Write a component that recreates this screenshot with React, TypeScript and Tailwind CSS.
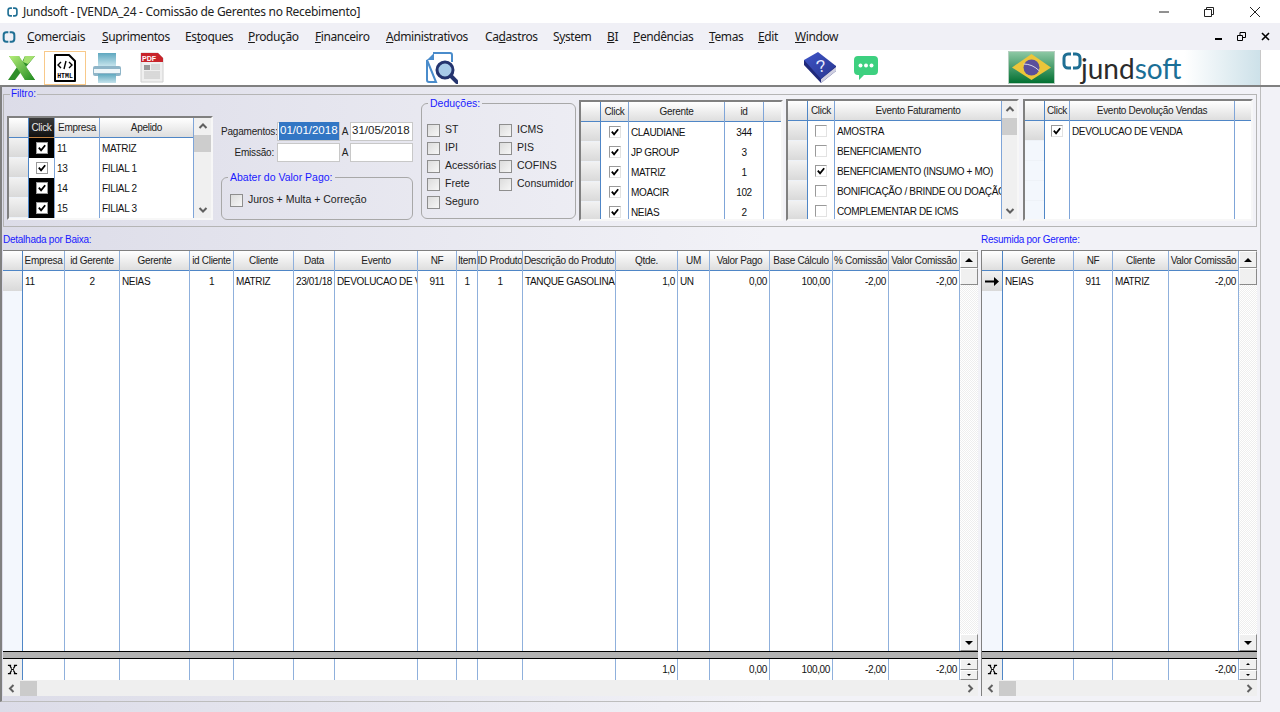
import type { ReactNode } from "react";

type Col = {
  label: string;
  w: string;
  align?: string;
  cells?: ReactNode[];
  footer?: string;
  dark?: boolean;
  noLine?: boolean;
};

const menus = [
  { pre: "", u: "C", post: "omerciais", w: "w-[75px]" },
  { pre: "", u: "S", post: "uprimentos", w: "w-[83px]" },
  { pre: "Es", u: "t", post: "oques", w: "w-[63px]" },
  { pre: "", u: "P", post: "rodução", w: "w-[67px]" },
  { pre: "", u: "F", post: "inanceiro", w: "w-[71px]" },
  { pre: "", u: "A", post: "dministrativos", w: "w-[99px]" },
  { pre: "Ca", u: "d", post: "astros", w: "w-[68px]" },
  { pre: "S", u: "y", post: "stem", w: "w-[54px]" },
  { pre: "", u: "B", post: "I", w: "w-[26px]" },
  { pre: "", u: "P", post: "endências", w: "w-[76px]" },
  { pre: "", u: "T", post: "emas", w: "w-[49px]" },
  { pre: "", u: "E", post: "dit", w: "w-[37px]" },
  { pre: "", u: "W", post: "indow", w: "w-[60px]" },
];

function Ring({ className }: { className: string }) {
  return (
    <svg viewBox="0 0 20 18" className={className} fill="none" stroke="#1f6f94" strokeWidth="3">
      <path d="M9 2H6a4 4 0 0 0-4 4v6a4 4 0 0 0 4 4h3" />
      <path d="M11 2h3a4 4 0 0 1 4 4v6a4 4 0 0 1-4 4h-3" />
    </svg>
  );
}

function Tick({ dark }: { dark?: boolean }) {
  return (
    <span
      className={`flex h-[12px] w-[12px] items-center justify-center border bg-white ${
        dark ? "border-[#9a9a9a]" : "border-t-[#9a9a9a] border-l-[#9a9a9a] border-r-[#e2e2e2] border-b-[#e2e2e2]"
      }`}
    >
      <svg viewBox="0 0 11 11" className="h-[10px] w-[10px]" fill="none" stroke="#000" strokeWidth="2">
        <path d="M2 5l2.5 3L9 2.5" />
      </svg>
    </span>
  );
}

function Empty() {
  return <span className="block h-[12px] w-[12px] border border-t-[#9a9a9a] border-l-[#9a9a9a] border-r-[#e2e2e2] border-b-[#e2e2e2] bg-white" />;
}

function Check({ label, className }: { label: string; className?: string }) {
  return (
    <div className={`flex h-[18px] items-center ${className ?? ""}`}>
      <span className="h-[13px] w-[13px] shrink-0 border border-[#8e8e8e] bg-[linear-gradient(135deg,#dcdcdc,#f6f6f6)]" />
      <span className="ml-[5px] whitespace-nowrap text-[10.5px] text-[#222]">{label}</span>
    </div>
  );
}

function Chevron({ dir }: { dir: "up" | "down" | "left" | "right" }) {
  const d = {
    up: "M1.5 6L5 2.5 8.5 6",
    down: "M1.5 3L5 6.5 8.5 3",
    left: "M6.5 1L3 4.5 6.5 8",
    right: "M3.5 1L7 4.5 3.5 8",
  }[dir];
  return (
    <svg viewBox="0 0 10 9" className="h-[9px] w-[10px]" fill="none" stroke="#606060" strokeWidth="2">
      <path d={d} />
    </svg>
  );
}

function Indicator({ filled }: { filled: boolean }) {
  return (
    <div
      className={`h-[20px] border-b border-[#eef2f8] ${
        filled ? "bg-[linear-gradient(180deg,#f2f2f2,#d9d9d9)]" : "bg-[#f3f7fd]"
      }`}
    />
  );
}

function HeaderCell({ label, dark }: { label: string; dark?: boolean }) {
  return (
    <div
      className={`flex h-[20px] items-center justify-center overflow-hidden whitespace-nowrap border-b text-[10px] tracking-[-0.3px] ${
        dark
          ? "border-[#c08040] bg-[linear-gradient(180deg,#3a3a3a,#111)] text-[#e8e8e8]"
          : "border-[#4f86c6] bg-[linear-gradient(180deg,#ffffff,#dedede)] text-[#222]"
      }`}
    >
      {label}
    </div>
  );
}

function SmallGrid({
  cols,
  rows,
  filled,
  className,
  scroll,
}: {
  cols: Col[];
  rows: number;
  filled: number;
  className: string;
  scroll?: boolean;
}) {
  return (
    <div className={`flex overflow-hidden border-2 border-t-[#808080] border-l-[#808080] border-r-[#f7f7f7] border-b-[#f7f7f7] bg-white ${className}`}>
      <div className="w-[20px] shrink-0 border-r border-[#4f86c6]">
        <div className="h-[20px] border-b border-[#4f86c6] bg-[linear-gradient(180deg,#ffffff,#dedede)]" />
        {Array.from({ length: rows }).map((_, i) => (
          <Indicator key={i} filled={i < filled} />
        ))}
      </div>
      {cols.map((c) => (
        <div key={c.label + c.w} className={`${c.w} shrink-0 ${c.noLine ? "" : "border-r border-[#7fa5d8]"}`}>
          <HeaderCell label={c.label} dark={c.dark} />
          {c.cells?.map((v, i) => (
            <div key={i} className={`flex h-[20px] items-center overflow-hidden whitespace-nowrap px-[2px] text-[10px] tracking-[-0.35px] text-[#111] ${c.align ?? ""}`}>
              {v}
            </div>
          ))}
        </div>
      ))}
      {scroll && (
        <div className="flex min-w-0 flex-1 flex-col items-center bg-[#f0f0f0]">
          <div className="flex h-[17px] items-center">
            <Chevron dir="up" />
          </div>
          <div className="h-[17px] w-full bg-[#cdcdcd]" />
          <div className="mt-auto flex h-[17px] items-center">
            <Chevron dir="down" />
          </div>
        </div>
      )}
    </div>
  );
}

function BevelButton({ className, children }: { className: string; children: ReactNode }) {
  return (
    <div className={`flex items-center justify-center border border-t-white border-l-white border-r-[#8a8a8a] border-b-[#8a8a8a] bg-[#f0f0f0] ${className}`}>
      {children}
    </div>
  );
}

function Tri({ up, small }: { up?: boolean; small?: boolean }) {
  return (
    <svg viewBox="0 0 8 4" className={small ? "h-[2px] w-[4px]" : "h-[4px] w-[8px]"} fill="#000">
      <path d={up ? "M4 0l4 4H0z" : "M0 0h8L4 4z"} />
    </svg>
  );
}

function MainGrid({
  cols,
  className,
  arrow,
  thumb,
}: {
  cols: Col[];
  className: string;
  arrow?: boolean;
  thumb: string;
}) {
  return (
    <div className={`flex h-[446px] flex-col border-t border-t-[#808080] bg-white ${className}`}>
      <div className="flex min-h-0 flex-1">
        <div className={`${arrow ? "w-[21px]" : "w-[20px]"} shrink-0 border-r border-[#4f86c6] bg-[#f3f7fd]`}>
          <div className="h-[20px] border-b border-[#4f86c6] bg-[linear-gradient(180deg,#ffffff,#dedede)]" />
          <div className="flex h-[20px] items-center justify-center bg-[linear-gradient(180deg,#f2f2f2,#d9d9d9)]">
            {arrow && (
              <svg viewBox="0 0 14 9" className="h-[9px] w-[14px]" fill="#000">
                <path d="M0 3.5h9V0l5 4.5L9 9V5.5H0z" />
              </svg>
            )}
          </div>
        </div>
        {cols.map((c) => (
          <div key={c.label + c.w} className={`${c.w} shrink-0 border-r border-[#8fb0dc]`}>
            <HeaderCell label={c.label} />
            {c.cells?.map((v, i) => (
              <div key={i} className={`flex h-[20px] items-center overflow-hidden whitespace-nowrap px-[2px] text-[10px] tracking-[-0.35px] text-[#111] ${c.align ?? ""}`}>
                {v}
              </div>
            ))}
          </div>
        ))}
        <div className="flex w-[18px] shrink-0 flex-col bg-[repeating-conic-gradient(#eeeeee_0_25%,#ffffff_0_50%)] bg-[length:2px_2px]">
          <BevelButton className="h-[17px]">
            <Tri up />
          </BevelButton>
          <BevelButton className="h-[17px]">
            <span />
          </BevelButton>
          <BevelButton className="mt-auto h-[17px]">
            <Tri />
          </BevelButton>
        </div>
      </div>
      <div className="h-[8px] shrink-0 border-y border-black bg-[#b3b3b3]" />
      <div className="flex h-[21px] shrink-0">
        <div className={`${arrow ? "w-[21px]" : "w-[20px]"} flex shrink-0 items-center justify-center border-r border-[#4f86c6] bg-[#eeeeee]`}>
          <svg viewBox="0 0 12 12" className="h-[11px] w-[11px]" fill="none" stroke="#000" strokeWidth="1.300">
            <path d="M1 1.500h3.500M7.500 1.500H11M1 10.500h3.500M7.500 10.500H11M3 1.500L5 5M9 1.500L7 5M3 10.500L5 7M9 10.500L7 7M4.500 6h3" />
          </svg>
        </div>
        {cols.map((c) => (
          <div key={c.label + c.w} className={`${c.w} flex shrink-0 items-center justify-end border-r border-[#8fb0dc] px-[2px] text-[10px] tracking-[-0.35px] text-[#111]`}>
            {c.footer}
          </div>
        ))}
        <div className="flex w-[18px] shrink-0 flex-col">
          <BevelButton className="h-[10px] flex-1">
            <Tri up small />
          </BevelButton>
          <BevelButton className="h-[10px] flex-1">
            <Tri small />
          </BevelButton>
        </div>
      </div>
      <div className="flex h-[16px] shrink-0 items-center bg-[#efefef]">
        <div className="flex w-[17px] justify-center">
          <Chevron dir="left" />
        </div>
        <div className={`h-[15px] bg-[#cbcbcb] ${thumb}`} />
        <div className="ml-auto flex w-[17px] justify-center">
          <Chevron dir="right" />
        </div>
      </div>
    </div>
  );
}

const ctr = "justify-center";
const rgt = "justify-end";

const detail: Col[] = [
  { label: "Empresa", w: "w-[42px]", cells: ["11"] },
  { label: "id Gerente", w: "w-[55px]", align: ctr, cells: ["2"] },
  { label: "Gerente", w: "w-[70px]", cells: ["NEIAS"] },
  { label: "id Cliente", w: "w-[44px]", align: ctr, cells: ["1"] },
  { label: "Cliente", w: "w-[60px]", cells: ["MATRIZ"] },
  { label: "Data", w: "w-[41px]", align: ctr, cells: ["23/01/18"] },
  { label: "Evento", w: "w-[83px]", cells: ["DEVOLUCAO DE VENDA"] },
  { label: "NF", w: "w-[39px]", align: ctr, cells: ["911"] },
  { label: "Item", w: "w-[21px]", align: ctr, cells: ["1"] },
  { label: "ID Produto", w: "w-[45px]", align: ctr, cells: ["1"] },
  { label: "Descrição do Produto", w: "w-[93px]", cells: ["TANQUE GASOLINA"] },
  { label: "Qtde.", w: "w-[62px]", align: rgt, cells: ["1,0"], footer: "1,0" },
  { label: "UM", w: "w-[32px]", cells: ["UN"] },
  { label: "Valor Pago", w: "w-[60px]", align: rgt, cells: ["0,00"], footer: "0,00" },
  { label: "Base Cálculo", w: "w-[63px]", align: rgt, cells: ["100,00"], footer: "100,00" },
  { label: "% Comissão", w: "w-[56px]", align: rgt, cells: ["-2,00"], footer: "-2,00" },
  { label: "Valor Comissão", w: "w-[71px]", align: rgt, cells: ["-2,00"], footer: "-2,00" },
];

const summary: Col[] = [
  { label: "Gerente", w: "w-[71px]", cells: ["NEIAS"] },
  { label: "NF", w: "w-[39px]", align: ctr, cells: ["911"] },
  { label: "Cliente", w: "w-[56px]", cells: ["MATRIZ"] },
  { label: "Valor Comissão", w: "w-[70px]", align: rgt, cells: ["-2,00"], footer: "-2,00" },
];

const ticks = (n: number) => Array.from({ length: n }).map((_, i) => <Tick key={i} />);

function ExcelIcon() {
  return (
    <svg viewBox="0 0 28 26" className="ml-[8px] h-[26px] w-[28px] shrink-0">
      <defs>
        <linearGradient id="xl" x1="0" y1="0" x2="1" y2="1">
          <stop offset="0" stopColor="#b7ef7a" />
          <stop offset="1" stopColor="#1f8a1f" />
        </linearGradient>
      </defs>
      <path d="M17 1h10l-9 11 9 13H17l-4-8-6 8H0l9-13L1 1h10l3 6z" fill="#2f8f2a" />
      <path d="M1 1h10l16 24H17z" fill="url(#xl)" />
      <path d="M17 1h10l-7 8-5-2z" fill="#a4e070" />
    </svg>
  );
}

function HtmlIcon() {
  return (
    <div className="ml-[8px] flex h-[34px] w-[42px] shrink-0 items-center justify-center border border-[#f8c98a]">
      <svg viewBox="0 0 24 30" className="h-[30px] w-[24px]">
        <path d="M2 2h14l6 6v20H2z" fill="#fff" stroke="#000" strokeWidth="2" strokeLinejoin="round" />
        <path d="M8 9l-3 3 3 3M16 9l3 3-3 3M13 8l-2 8" fill="none" stroke="#000" strokeWidth="1.400" />
        <text x="12" y="24.500" textAnchor="middle" fontSize="6.500" fontWeight="700" fontFamily="Liberation Mono, monospace" fill="#000">
          HTML
        </text>
      </svg>
    </div>
  );
}

function PrinterIcon() {
  return (
    <svg viewBox="0 0 30 32" className="ml-[6px] h-[32px] w-[30px] shrink-0">
      <defs>
        <linearGradient id="pr" x1="0" y1="0" x2="0" y2="1">
          <stop offset="0" stopColor="#5fa8bf" />
          <stop offset="1" stopColor="#c5e3ec" />
        </linearGradient>
      </defs>
      <path d="M6 1h18v13H6z" fill="url(#pr)" />
      <rect x="1" y="14" width="28" height="10" rx="2" fill="#8fb5c8" />
      <rect x="2" y="17" width="26" height="4" fill="#eef6f9" />
      <path d="M6 22h18v9H6z" fill="url(#pr)" />
    </svg>
  );
}

function PdfIcon() {
  return (
    <svg viewBox="0 0 24 31" className="ml-[18px] h-[31px] w-[24px] shrink-0">
      <path d="M1 1h17l5 5v24H1z" fill="#efefef" stroke="#d0d0d0" />
      <path d="M1 1h17l5 5v4H1z" fill="#c8242b" />
      <text x="2" y="8.500" fontSize="7" fontWeight="700" fontFamily="Liberation Sans, sans-serif" fill="#fff">
        PDF
      </text>
      <rect x="4" y="13" width="6" height="5" fill="#999" />
      <path d="M11 13h9M11 15h9M11 17h9M4 20h16M4 22h16M4 24h16M4 26h16" stroke="#b8b8b8" strokeWidth="0.800" />
    </svg>
  );
}

function SearchDocIcon() {
  return (
    <svg viewBox="0 0 32 32" className="ml-[262px] h-[32px] w-[32px] shrink-0">
      <path d="M7 1h17a2 2 0 0 1 2 2v7M10 30H3a2 2 0 0 1-2-2V8z" fill="#fff" stroke="#4a8ccb" strokeWidth="2" />
      <path d="M1 8l7-7v7z" fill="#4a8ccb" />
      <circle cx="19" cy="18" r="8" fill="#a8cbe8" stroke="#24346e" strokeWidth="3" />
      <path d="M25 24l6 6" stroke="#24346e" strokeWidth="4" strokeLinecap="round" />
    </svg>
  );
}

function BookIcon() {
  return (
    <svg viewBox="0 0 34 33" className="ml-[345px] h-[33px] w-[34px] shrink-0">
      <defs>
        <linearGradient id="bk" x1="0" y1="0" x2="1" y2="1">
          <stop offset="0" stopColor="#3f55c8" />
          <stop offset="1" stopColor="#27358f" />
        </linearGradient>
      </defs>
      <path d="M1 9v5l17 18 15-12v-5z" fill="#20297a" />
      <path d="M18 28l15-12v4L18 32z" fill="#cfcfe0" />
      <path d="M15 1L1 9l17 19 15-13z" fill="url(#bk)" />
      <text x="18" y="21" textAnchor="middle" fontSize="17" fontFamily="Liberation Sans, sans-serif" fill="#e8ecff" transform="rotate(-12 18 15)">
        ?
      </text>
    </svg>
  );
}

function ChatIcon() {
  return (
    <svg viewBox="0 0 26 26" className="ml-[16px] h-[26px] w-[26px] shrink-0">
      <path d="M5 1h16a4 4 0 0 1 4 4v11a4 4 0 0 1-4 4H11l-5 5v-5H5a4 4 0 0 1-4-4V5a4 4 0 0 1 4-4z" fill="#3dd07f" />
      <circle cx="7.500" cy="10.500" r="2" fill="#fff" />
      <circle cx="13" cy="10.500" r="2" fill="#fff" />
      <circle cx="18.500" cy="10.500" r="2" fill="#fff" />
    </svg>
  );
}

function FlagIcon() {
  return (
    <svg viewBox="0 0 47 33" className="h-[33px] w-[47px] shrink-0">
      <defs>
        <linearGradient id="br" x1="0" y1="0" x2="0" y2="1">
          <stop offset="0" stopColor="#8fc9a5" />
          <stop offset="1" stopColor="#006f30" />
        </linearGradient>
      </defs>
      <rect x="0.500" y="0.500" width="46" height="32" fill="url(#br)" stroke="#b5cfc0" />
      <path d="M4 16.500L23.500 3 43 16.500 23.500 29z" fill="#ecc53a" />
      <circle cx="23.500" cy="16.500" r="8" fill="#5a4f9c" />
      <path d="M15.500 13q9 0 16 7" fill="none" stroke="#d8d8e8" strokeWidth="1" />
    </svg>
  );
}

export default function App() {
  return (
    <div className="flex h-[712px] w-[1280px] flex-col overflow-hidden bg-[linear-gradient(90deg,#dcdce8,#f2f2f7_60%)] [font-family:'Liberation_Sans',Arial,sans-serif]">
      {/* ===== Title bar ===== */}
      <div className="flex h-[23px] shrink-0 items-center bg-white">
        <Ring className="ml-[7px] h-[10px] w-[11px]" />
        <span className="ml-[5px] text-[12px] tracking-[-0.3px] text-[#222] [font-family:'Noto_Sans',sans-serif]">
          Jundsoft - [VENDA_24 - Comissão de Gerentes no Recebimento]
        </span>
        <svg viewBox="0 0 10 10" className="ml-auto h-[10px] w-[10px]" fill="none" stroke="#222">
          <path d="M0 5h10" />
        </svg>
        <svg viewBox="0 0 10 10" className="ml-[35px] h-[10px] w-[10px]" fill="none" stroke="#222">
          <path d="M.5 2.500h7v7h-7zM2.500 2.500v-2h7v7h-2" />
        </svg>
        <svg viewBox="0 0 10 10" className="ml-[36px] mr-[20px] h-[10px] w-[10px]" fill="none" stroke="#222">
          <path d="M0 0l10 10M10 0L0 10" />
        </svg>
      </div>

      {/* ===== Menu bar ===== */}
      <div className="flex h-[27px] shrink-0 items-center bg-[#f0f0f6] text-[12px] tracking-[-0.4px] text-[#1a1a1a] [font-family:'Noto_Sans',sans-serif]">
        <Ring className="ml-[2px] h-[12px] w-[14px]" />
        <div className="ml-[11px] flex">
          {menus.map((m) => (
            <span key={m.pre + m.u + m.post} className={`${m.w} whitespace-nowrap`}>
              {m.pre}
              <span className="underline">{m.u}</span>
              {m.post}
            </span>
          ))}
        </div>
        <svg viewBox="0 0 8 8" className="ml-[360px] h-[8px] w-[8px]" fill="#000">
          <path d="M0 5h7v2H0z" />
        </svg>
        <svg viewBox="0 0 9 9" className="ml-[14px] h-[9px] w-[9px]" fill="none" stroke="#000">
          <path d="M.5 3.500h5v5h-5zM3 3.500v-3h5.500v5H6" />
        </svg>
        <svg viewBox="0 0 9 9" className="ml-[15px] h-[9px] w-[9px]" fill="none" stroke="#000" strokeWidth="1.600">
          <path d="M1 1l7 7M8 1L1 8" />
        </svg>
      </div>

      {/* ===== Toolbar ===== */}
      <div className="flex h-[35px] shrink-0 items-center bg-white">
        <ExcelIcon />
        <HtmlIcon />
        <PrinterIcon />
        <PdfIcon />
        <SearchDocIcon />
        <BookIcon />
        <ChatIcon />
        <div className="ml-[129px] flex h-[35px] w-[253px] shrink-0 items-center border-r border-[#c8c8c8] bg-[linear-gradient(90deg,#ffffff_70%,#cde1e9)]">
          <FlagIcon />
          <div className="ml-[7px] flex items-start">
            <Ring className="mt-[0px] h-[18px] w-[20px]" />
            <span className="ml-[-1px] mt-[1px] text-[28px] leading-[30px] [font-family:'Lato',sans-serif]">
              <span className="text-[#2b2b2b]">jund</span>
              <span className="text-[#1b6f96]">soft</span>
            </span>
          </div>
        </div>
      </div>
      <div className="h-[2px] shrink-0 bg-[#808080]" />

      {/* ===== Main panel ===== */}
      <div className="h-[615px] w-[1261px] shrink-0 border-b border-r border-[#bdbdbd] border-l-2 border-l-[#808080] pl-[1px]">
        {/* ===== Filtro ===== */}
        <fieldset className="mt-[1px] flex h-[139px] w-[1254px] items-start border border-[#b5b5b5] pl-[3px]">
          <legend className="ml-[3px] px-[1px] text-[10px] leading-[12px] text-[#1a1aff]">Filtro:</legend>

          <SmallGrid
            className="mt-[16px] h-[104px] w-[206px] shrink-0"
            rows={5}
            filled={5}
            scroll
            cols={[
              {
                label: "Click",
                w: "w-[26px]",
                dark: true,
                align: "justify-center !px-0",
                cells: [
                  <div key="a" className="flex h-full w-full items-center justify-center bg-black"><Tick dark /></div>,
                  <Tick key="b" dark />,
                  <div key="c" className="flex h-full w-full items-center justify-center bg-black"><Tick dark /></div>,
                  <div key="d" className="flex h-full w-full items-center justify-center bg-black"><Tick dark /></div>,
                  <div key="e" className="h-full w-full bg-black" />,
                ],
              },
              { label: "Empresa", w: "w-[45px]", cells: ["11", "13", "14", "15"] },
              { label: "Apelido", w: "w-[94px]", cells: ["MATRIZ", "FILIAL 1", "FILIAL 2", "FILIAL 3"] },
            ]}
          />

          {/* ===== Datas e abatimento ===== */}
          <div className="ml-[8px] mt-[21px] w-[192px] shrink-0 text-[10px] tracking-[-0.2px] text-[#222]">
            <div className="flex h-[20px] items-center">
              <span className="w-[53px] whitespace-nowrap text-right">Pagamentos:</span>
              <div className="ml-[3px] flex h-[19px] w-[63px] items-center border border-[#c8c8c8] bg-white px-[1px] text-[11.5px] tracking-normal">
                <span className="bg-[#3276c4] px-[1px] text-white">01/01/2018</span>
              </div>
              <span className="w-[10px] text-center">A</span>
              <div className="flex h-[19px] w-[63px] items-center border border-[#c8c8c8] bg-white px-[1px] text-[11.5px] tracking-normal">31/05/2018</div>
            </div>
            <div className="mt-[1px] flex h-[20px] items-center">
              <span className="w-[53px] text-right">Emissão:</span>
              <div className="ml-[3px] h-[19px] w-[63px] border border-[#c8c8c8] bg-white" />
              <span className="w-[10px] text-center">A</span>
              <div className="h-[19px] w-[63px] border border-[#c8c8c8] bg-white" />
            </div>
            <fieldset className="mt-[9px] h-[49px] rounded-[6px] border border-[#a8a8a8] pl-[8px] tracking-normal">
              <legend className="ml-[-2px] px-[2px] text-[10.5px] leading-[13px] text-[#1a1aff]">Abater do Valor Pago:</legend>
              <Check label="Juros + Multa + Correção" className="mt-[7px]" />
            </fieldset>
          </div>

          {/* ===== Deduções ===== */}
          <fieldset className="ml-[8px] mt-[-3px] h-[122px] w-[155px] shrink-0 rounded-[6px] border border-[#a8a8a8] pl-[5px]">
            <legend className="ml-[1px] px-[2px] text-[10.5px] leading-[13px] text-[#1a1aff]">Deduções:</legend>
            <div className="mt-[11px] grid grid-cols-[72px_1fr]">
              <div>
                <Check label="ST" />
                <Check label="IPI" />
                <Check label="Acessórias" />
                <Check label="Frete" />
                <Check label="Seguro" />
              </div>
              <div>
                <Check label="ICMS" />
                <Check label="PIS" />
                <Check label="COFINS" />
                <Check label="Consumidor" />
              </div>
            </div>
          </fieldset>

          <SmallGrid
            className="ml-[3px] h-[121px] w-[204px] shrink-0"
            rows={5}
            filled={5}
            cols={[
              { label: "Click", w: "w-[28px]", align: ctr, cells: ticks(5) },
              { label: "Gerente", w: "w-[96px]", cells: ["CLAUDIANE", "JP GROUP", "MATRIZ", "MOACIR", "NEIAS"] },
              { label: "id", w: "w-[39px]", align: ctr, cells: ["344", "3", "1", "102", "2"] },
              { label: "", w: "w-[17px]", noLine: true },
            ]}
          />

          <SmallGrid
            className="ml-[3px] mt-[-1px] h-[122px] w-[233px] shrink-0"
            rows={5}
            filled={5}
            scroll
            cols={[
              {
                label: "Click",
                w: "w-[27px]",
                align: ctr,
                cells: [<Empty key="a" />, <Empty key="b" />, <Tick key="c" />, <Empty key="d" />, <Empty key="e" />],
              },
              {
                label: "Evento Faturamento",
                w: "w-[167px]",
                cells: [
                  "AMOSTRA",
                  "BENEFICIAMENTO",
                  "BENEFICIAMENTO (INSUMO + MO)",
                  "BONIFICAÇÃO / BRINDE OU DOAÇÃO",
                  "COMPLEMENTAR DE ICMS",
                ],
              },
            ]}
          />

          <SmallGrid
            className="ml-[4px] mt-[-1px] h-[122px] w-[230px] shrink-0"
            rows={5}
            filled={1}
            cols={[
              { label: "Click", w: "w-[25px]", align: ctr, cells: ticks(1) },
              { label: "Evento Devolução Vendas", w: "w-[165px]", cells: ["DEVOLUCAO DE VENDA"] },
              { label: "", w: "w-[16px]", noLine: true },
            ]}
          />
        </fieldset>

        {/* ===== Legendas das grades ===== */}
        <div className="flex h-[23px] items-center pt-[1px] text-[10px] tracking-[-0.25px] text-[#1a1aff]">
          <span className="w-[978px]">Detalhada por Baixa:</span>
          <span>Resumida por Gerente:</span>
        </div>

        {/* ===== Grades ===== */}
        <div className="flex">
          <MainGrid cols={detail} className="w-[975px]" thumb="w-[17px]" />
          <div className="w-[3px]" />
          <MainGrid cols={summary} className="w-[276px] border-l border-l-[#808080]" arrow thumb="w-[17px]" />
        </div>
      </div>
    </div>
  );
}
